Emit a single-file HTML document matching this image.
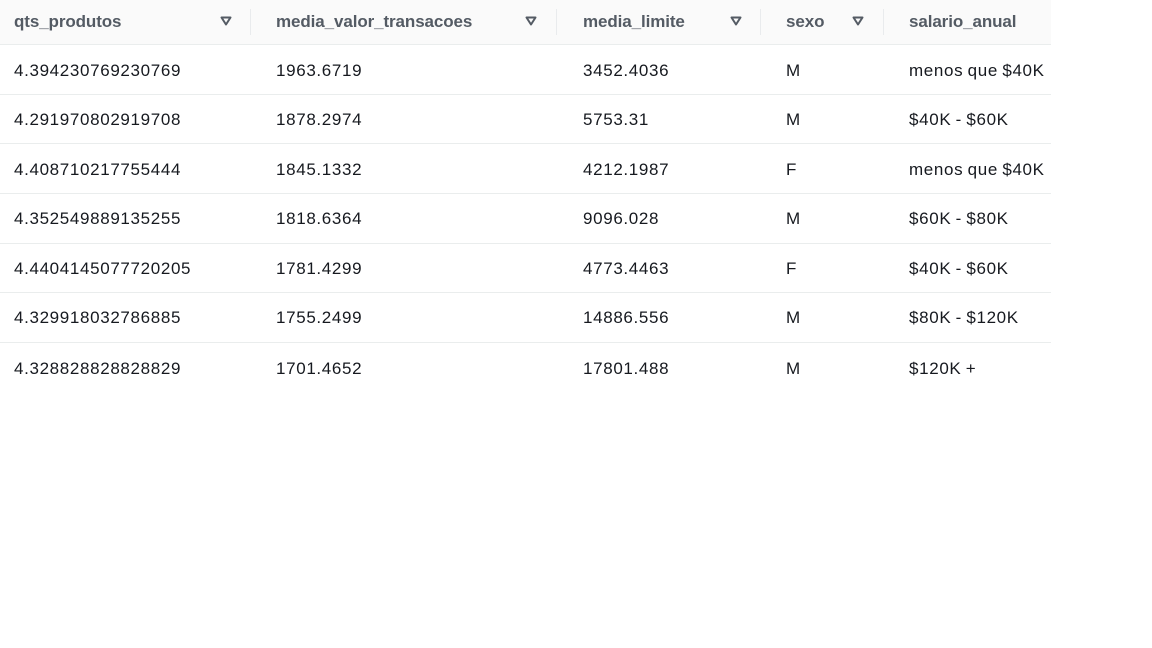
<!DOCTYPE html>
<html><head><style>
body{margin:0;background:#fff;font-family:"Liberation Sans",Arial,sans-serif;}
.h{position:absolute;left:0;top:0;width:1051px;height:45px;background:#fafafa;border-bottom:1px solid #eaeded;box-sizing:border-box;}
.hc{position:absolute;top:12px;font-weight:bold;font-size:17px;color:#545b64;letter-spacing:-0.1px;}
.sep{position:absolute;top:9px;width:1px;height:26px;background:#e9ebed;}
.r{position:absolute;left:0;width:1051px;height:50px;border-bottom:1px solid #eaeded;box-sizing:border-box;}
.c{position:absolute;font-size:17px;color:#16191f;top:16px;letter-spacing:0.65px;word-spacing:-1px;}
.r.b .c{top:15px;}
</style></head><body>
<div class="h">
<div class="hc" style="left:14px">qts_produtos</div>
<div class="hc" style="left:276px">media_valor_transacoes</div>
<div class="hc" style="left:583px">media_limite</div>
<div class="hc" style="left:786px">sexo</div>
<div class="hc" style="left:909px">salario_anual</div>
<div class="sep" style="left:250px"></div><div class="sep" style="left:556px"></div><div class="sep" style="left:760px"></div><div class="sep" style="left:883px"></div>
<svg style="position:absolute;left:220px;top:16px" width="12" height="10"><path d="M1.5 1.5H10.5L6 8.5Z" fill="none" stroke="#545b64" stroke-width="2" stroke-linejoin="round"/></svg>
<svg style="position:absolute;left:525px;top:16px" width="12" height="10"><path d="M1.5 1.5H10.5L6 8.5Z" fill="none" stroke="#545b64" stroke-width="2" stroke-linejoin="round"/></svg>
<svg style="position:absolute;left:730px;top:16px" width="12" height="10"><path d="M1.5 1.5H10.5L6 8.5Z" fill="none" stroke="#545b64" stroke-width="2" stroke-linejoin="round"/></svg>
<svg style="position:absolute;left:852px;top:16px" width="12" height="10"><path d="M1.5 1.5H10.5L6 8.5Z" fill="none" stroke="#545b64" stroke-width="2" stroke-linejoin="round"/></svg>
</div>
<div class="r" style="top:45px"><span class="c" style="left:14px">4.394230769230769</span><span class="c" style="left:276px">1963.6719</span><span class="c" style="left:583px">3452.4036</span><span class="c" style="left:786px">M</span><span class="c" style="left:909px">menos que $40K</span></div>
<div class="r b" style="top:95px;height:49px"><span class="c" style="left:14px">4.291970802919708</span><span class="c" style="left:276px">1878.2974</span><span class="c" style="left:583px">5753.31</span><span class="c" style="left:786px">M</span><span class="c" style="left:909px">$40K - $60K</span></div>
<div class="r" style="top:144px"><span class="c" style="left:14px">4.408710217755444</span><span class="c" style="left:276px">1845.1332</span><span class="c" style="left:583px">4212.1987</span><span class="c" style="left:786px">F</span><span class="c" style="left:909px">menos que $40K</span></div>
<div class="r b" style="top:194px"><span class="c" style="left:14px">4.352549889135255</span><span class="c" style="left:276px">1818.6364</span><span class="c" style="left:583px">9096.028</span><span class="c" style="left:786px">M</span><span class="c" style="left:909px">$60K - $80K</span></div>
<div class="r" style="top:243px"><span class="c" style="left:14px">4.4404145077720205</span><span class="c" style="left:276px">1781.4299</span><span class="c" style="left:583px">4773.4463</span><span class="c" style="left:786px">F</span><span class="c" style="left:909px">$40K - $60K</span></div>
<div class="r b" style="top:293px;height:50px"><span class="c" style="left:14px">4.329918032786885</span><span class="c" style="left:276px">1755.2499</span><span class="c" style="left:583px">14886.556</span><span class="c" style="left:786px">M</span><span class="c" style="left:909px">$80K - $120K</span></div>
<div class="r" style="top:343px;border-bottom:none"><span class="c" style="left:14px">4.328828828828829</span><span class="c" style="left:276px">1701.4652</span><span class="c" style="left:583px">17801.488</span><span class="c" style="left:786px">M</span><span class="c" style="left:909px">$120K +</span></div>
</body></html>
